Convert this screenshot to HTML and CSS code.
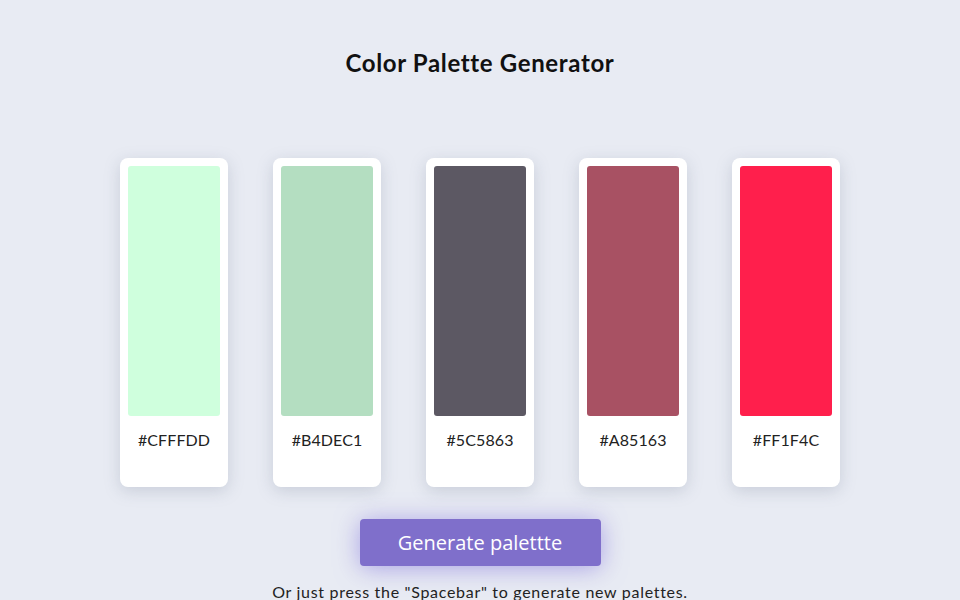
FILE: index.html
```html
<!DOCTYPE html>
<html lang="en">
<head>
    <meta charset="UTF-8">
    <meta name="viewport" content="width=device-width, initial-scale=1.0">
    <title>Color Palette Generator</title>
    <link rel="stylesheet" href="styles.css">
</head>
<body>
    <h1 class="title">Color Palette Generator</h1>
    <div class="palette">
        <div class="card">
            <div class="swatch" style="background: #CFFFDD"></div>
            <span class="hex">#CFFFDD</span>
        </div>
        <div class="card">
            <div class="swatch" style="background: #B4DEC1"></div>
            <span class="hex">#B4DEC1</span>
        </div>
        <div class="card">
            <div class="swatch" style="background: #5C5863"></div>
            <span class="hex">#5C5863</span>
        </div>
        <div class="card">
            <div class="swatch" style="background: #A85163"></div>
            <span class="hex">#A85163</span>
        </div>
        <div class="card">
            <div class="swatch" style="background: #FF1F4C"></div>
            <span class="hex">#FF1F4C</span>
        </div>
    </div>
    <div class="actions">
        <button type="button" class="generate-btn">Generate palettte</button>
        <p class="hint">Or just press the "Spacebar" to generate new palettes.</p>
    </div>
</body>
</html>
```

FILE: styles.css
```css
body {
    margin: 0;
    background: #e8ebf3;
    font-family: "Lato", "Noto Sans", sans-serif;
    color: #1f1f24;
}

.title {
    margin: 48px 0 0;
    font-size: 24px;
    line-height: 30px;
    font-weight: 700;
    letter-spacing: 0.65px;
    text-align: center;
    color: #111;
}

.palette {
    display: flex;
    justify-content: center;
    gap: 45px;
    margin-top: 80px;
}

.card {
    box-sizing: border-box;
    width: 108px;
    height: 329px;
    padding: 8px;
    background: #fff;
    border-radius: 8px;
    box-shadow: 0 4px 16px rgba(120, 130, 150, 0.28);
    display: flex;
    flex-direction: column;
    align-items: center;
}

.swatch {
    width: 92px;
    height: 250px;
    border-radius: 3px;
}

.hex {
    margin-top: 14px;
    font-size: 16px;
    line-height: 20px;
    letter-spacing: 0.1px;
    color: #222;
}

.actions {
    display: flex;
    flex-direction: column;
    align-items: center;
    margin-top: 32px;
}

.generate-btn {
    width: 241px;
    height: 47px;
    border: none;
    border-radius: 4px;
    background: #7f6fcb;
    color: #fff;
    font-family: "Open Sans", sans-serif;
    font-size: 20px;
    box-shadow: 0 2px 24px rgba(127, 111, 220, 0.6);
    cursor: pointer;
}

.hint {
    margin: 16px 0 0;
    font-size: 16px;
    line-height: 20px;
    letter-spacing: 0.7px;
    color: #222;
}
```
